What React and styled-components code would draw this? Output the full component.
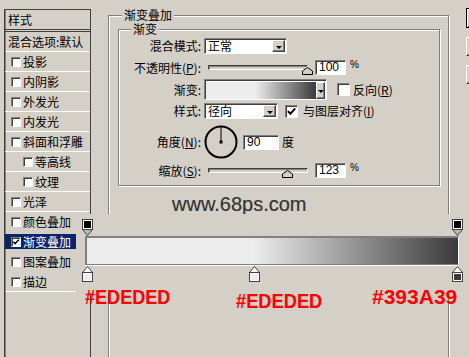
import styled, { createGlobalStyle, css } from "styled-components"

const FACE = "#d4d0c8"
const GRADIENT = "linear-gradient(to right, #ededed 0%, #ededed 45%, #393a39 100%)"

const sunken = css`
    box-sizing: border-box;
    border: 1px solid;
    border-color: #808080 #fff #fff #808080;
    box-shadow: inset 1px 1px 0 #404040;
    background: #fff;
`

const raised = css`
    box-sizing: border-box;
    border: 1px solid;
    border-color: #fff #404040 #404040 #fff;
    box-shadow: inset -1px -1px 0 #808080;
    background: ${FACE};
`

const layers = [
    { label: '投影' },
    { label: '内阴影' },
    { label: '外发光' },
    { label: '内发光' },
    { label: '斜面和浮雕' },
    { label: '等高线', indent: true },
    { label: '纹理', indent: true },
    { label: '光泽' },
    { label: '颜色叠加', line: 'none' },
    { label: '渐变叠加', line: 'none', active: true, checked: true },
    { label: '图案叠加', line: 'none' },
    { label: '描边', line: 'short' },
]

const opacityStops = [0, 100]
const colorStops = [
    { pos: 0, color: '#ededed', label: '#EDEDED', mt: 0, sx: 0.86 },
    { pos: 45, color: '#ededed', label: '#EDEDED', mt: 4, sx: 0.87 },
    { pos: 100, color: '#393a39', label: '#393A39', mt: 0, sx: 1 },
]

export default function App() {
    return (
        <>
            <GlobalStyle />
            <Screen>
                <LeftPanel>
                    <Header>样式</Header>
                    <List>
                        <ListRow>
                            <Item><Entry>混合选项:默认</Entry></Item>
                        </ListRow>
                        {layers.map(l => (
                            <ListRow key={l.label} $line={l.line}>
                                <Item>
                                    <Entry $active={l.active} $indent={l.indent} $box>
                                        <SmallBox>{l.checked && <Check size={8} />}</SmallBox>
                                        {l.label}
                                    </Entry>
                                </Item>
                            </ListRow>
                        ))}
                    </List>
                </LeftPanel>

                <GroupBox $w={341} $h={360} $mt={15} $ml={17}>
                    <Caption $x={13}>渐变叠加</Caption>
                    <GroupBox $w={322} $h={157} $mt={13} $ml={9}>
                        <Caption $x={12}>渐变</Caption>

                        <Row $h={16} $mt={8}>
                            <Label>混合模式:</Label>
                            <Select $w={83}>
                                <span>正常</span>
                                <DropBtn $w={13} $h={12}><Arrow /></DropBtn>
                            </Select>
                        </Row>

                        <Row $h={15} $mt={6}>
                            <Label>不透明性(<u>P</u>):</Label>
                            <Slider value={100} />
                            <NumField $w={31} $ml={7}>100</NumField>
                            <Percent>%</Percent>
                        </Row>

                        <Row $h={21} $mt={4}>
                            <Label>渐变:</Label>
                            <Preview>
                                <PreviewFill />
                                <DropBtn $w={9} $h={17}><Arrow /></DropBtn>
                            </Preview>
                            <CheckBox $ml={10} />
                            <OptionText $ml={3}>反向(<u>R</u>)</OptionText>
                        </Row>

                        <Row $h={16} $mt={3}>
                            <Label>样式:</Label>
                            <Select $w={74}>
                                <span>径向</span>
                                <DropBtn $w={13} $h={12}><Arrow /></DropBtn>
                            </Select>
                            <CheckBox $ml={7}><Check size={11} /></CheckBox>
                            <OptionText $ml={5}>与图层对齐(<u>I</u>)</OptionText>
                        </Row>

                        <Row $h={34} $mt={6}>
                            <Label>角度(<u>N</u>):</Label>
                            <Dial angle={90} />
                            <NumField $w={36} $ml={5}>90</NumField>
                            <OptionText $ml={3}>度</OptionText>
                        </Row>

                        <Row $h={15} $mt={4}>
                            <Label>缩放(<u>S</u>):</Label>
                            <Slider value={80} />
                            <NumField $w={31} $ml={7}>123</NumField>
                            <Percent>%</Percent>
                        </Row>
                    </GroupBox>
                    <Watermark>www.68ps.com</Watermark>
                </GroupBox>

                <ButtonStack>
                    <DlgButton $h={20} $default />
                    <DlgButton $h={19} />
                    <DlgButton $h={19} />
                </ButtonStack>

                <Editor>
                    <Cover>
                        <StopTrack $h={17}>
                            {opacityStops.map(p => (
                                <Marker key={p} style={{ left: `calc(${p}% - 5px)` }}>
                                    <OpacityStop />
                                </Marker>
                            ))}
                        </StopTrack>
                        <Bar />
                        <StopTrack $h={16} $mt={1}>
                            {colorStops.map(s => (
                                <Marker key={s.pos} style={{ left: `calc(${s.pos}% - 5px)` }}>
                                    <ColorStop color={s.color} />
                                </Marker>
                            ))}
                        </StopTrack>
                    </Cover>
                    <Notes>
                        {colorStops.map(s => (
                            <Note key={s.pos} $mt={s.mt} $sx={s.sx}>{s.label}</Note>
                        ))}
                    </Notes>
                </Editor>
            </Screen>
        </>
    )
}

const Check = ({ size }) => (
    <svg width={size} height={size} viewBox="0 0 10 10">
        <path d="M1.8 4.6 L4 7 L8.4 2.2" fill="none" stroke="#000" strokeWidth="1.8" />
    </svg>
)

const Slider = ({ value }) => (
    <Track>
        <Thumb style={{ left: `calc(${value}% - 5px)` }}>
            <svg width="11" height="8" viewBox="0 0 11 8">
                <path d="M0.5 4 L5.5 0.5 L10.5 4 L10.5 7.5 L0.5 7.5 Z" fill={FACE} stroke="#000" />
            </svg>
        </Thumb>
    </Track>
)

const Dial = ({ angle }) => {
    const r = (angle * Math.PI) / 180
    const x = 17 + Math.cos(r) * 15
    const y = 17 - Math.sin(r) * 15
    return (
        <DialWrap>
            <svg width="34" height="34" viewBox="0 0 34 34">
                <circle cx="17" cy="17" r="15.5" fill="none" stroke="#000" strokeWidth="2" />
                <line x1="17" y1="17" x2={x} y2={y} stroke="#000" strokeWidth="1" />
                <rect x="15.5" y="15.5" width="3" height="3" fill="#000" />
            </svg>
        </DialWrap>
    )
}

const OpacityStop = () => (
    <svg width="11" height="17" viewBox="0 0 11 17">
        <path d="M0.5 10.5 L5.5 16.5 L10.5 10.5 Z" fill="#b8b8b8" stroke="#404040" />
        <rect x="0.5" y="0.5" width="10" height="10" fill="#fff" stroke="#404040" />
        <rect x="2" y="2" width="7" height="7" fill="#000" />
    </svg>
)

const ColorStop = ({ color }) => (
    <svg width="11" height="16" viewBox="0 0 11 16">
        <path d="M0.5 6.5 L5.5 0.5 L10.5 6.5 Z" fill="#fff" stroke="#404040" />
        <rect x="0.5" y="6.5" width="10" height="9" fill="#fff" stroke="#404040" />
        <rect x="2" y="8" width="7" height="6" fill={color} />
    </svg>
)

const GlobalStyle = createGlobalStyle`
    html, body {
        margin: 0;
        padding: 0;
        background: ${FACE};
    }
    body {
        font-family: "Noto Sans CJK SC", "Noto Sans", sans-serif;
        font-size: 12px;
        color: #000;
    }
`

const Screen = styled.div`
    position: relative;
    width: 469px;
    height: 357px;
    overflow: hidden;
    display: flex;
    align-items: flex-start;
    background: ${FACE};
`

const LeftPanel = styled.div`
    flex-shrink: 0;
    margin: 9px 0 0 4px;
    width: 87px;
    height: 348px;
    box-sizing: border-box;
    border-left: 1px solid #404040;
    border-right: 1px solid #404040;
    box-shadow: inset 1px 0 0 #808080;
`

const Header = styled.div`
    box-sizing: border-box;
    height: 21px;
    border-top: 1px solid #404040;
    border-bottom: 1px solid #404040;
    padding-left: 3px;
    line-height: 19px;
`

const List = styled.div`
    margin-top: 1px;
    border-top: 1px solid #404040;
`

const ListRow = styled.div`
    height: 20px;
    display: flex;
    flex-direction: column;

    &::after {
        content: '';
        display: ${({ $line }) => ($line === 'none' ? 'none' : 'block')};
        height: 1px;
        width: ${({ $line }) => ($line === 'short' ? '71px' : 'auto')};
        background: #fff;
    }
`

const Item = styled.div`
    height: 19px;
    display: flex;
    align-items: center;
`

const Entry = styled.div`
    box-sizing: border-box;
    display: flex;
    align-items: center;
    gap: 2px;
    width: 71px;
    height: 15px;
    line-height: 14px;
    white-space: nowrap;
    padding-left: ${({ $box, $indent }) => (!$box ? 3 : $indent ? 18 : 6)}px;
    background: ${({ $active }) => ($active ? '#0a246a' : 'transparent')};
    color: ${({ $active }) => ($active ? '#fff' : '#000')};
`

const SmallBox = styled.span`
    ${sunken};
    flex-shrink: 0;
    width: 10px;
    height: 10px;
    display: flex;
    align-items: center;
    justify-content: center;
`

const GroupBox = styled.div`
    position: relative;
    flex-shrink: 0;
    box-sizing: border-box;
    width: ${({ $w }) => $w}px;
    height: ${({ $h }) => $h}px;
    margin: ${({ $mt }) => $mt}px 0 0 ${({ $ml }) => $ml}px;
    border: 1px solid #808080;
    box-shadow: inset 1px 1px 0 #fff, 1px 1px 0 #fff;
`

const Caption = styled.span`
    position: absolute;
    top: -7px;
    left: ${({ $x }) => $x}px;
    padding: 0 2px;
    line-height: 12px;
    background: ${FACE};
    white-space: nowrap;
`

const Row = styled.div`
    display: flex;
    align-items: center;
    height: ${({ $h }) => $h}px;
    margin-top: ${({ $mt }) => $mt}px;
`

const Label = styled.div`
    flex-shrink: 0;
    width: 82px;
    margin-right: 3px;
    text-align: right;
    line-height: 14px;
    white-space: nowrap;
`

const Select = styled.div`
    ${sunken};
    width: ${({ $w }) => $w}px;
    height: 16px;
    display: flex;
    align-items: center;
    padding-left: 3px;
    line-height: 14px;
`

const DropBtn = styled.span`
    ${raised};
    margin-left: auto;
    margin-right: 1px;
    width: ${({ $w }) => $w}px;
    height: ${({ $h }) => $h}px;
    display: flex;
    align-items: center;
    justify-content: center;
    padding-top: 2px;
`

const Arrow = styled.span`
    width: 0;
    height: 0;
    border-left: 3px solid transparent;
    border-right: 3px solid transparent;
    border-top: 3px solid #000;
`

const Track = styled.div`
    position: relative;
    flex-shrink: 0;
    box-sizing: border-box;
    width: 100px;
    height: 5px;
    margin-left: 4px;
    border: 1px solid;
    border-color: #404040 #fff #fff #404040;
    box-shadow: inset 1px 1px 0 #808080;
    background: ${FACE};
`

const Thumb = styled.span`
    position: absolute;
    top: 1px;
    line-height: 0;
`

const NumField = styled.div`
    ${sunken};
    flex-shrink: 0;
    width: ${({ $w }) => $w}px;
    height: 15px;
    margin-left: ${({ $ml }) => $ml}px;
    padding-left: 3px;
    font-family: "Liberation Sans", Arial, sans-serif;
    font-size: 12px;
    line-height: 13px;
`

const Percent = styled.span`
    align-self: flex-start;
    margin-left: 4px;
    font-family: "Liberation Sans", Arial, sans-serif;
    font-size: 10px;
    line-height: 10px;
`

const Preview = styled.div`
    ${sunken};
    flex-shrink: 0;
    width: 123px;
    height: 21px;
    display: flex;
    align-items: center;
    padding: 1px 0 0 1px;
`

const PreviewFill = styled.span`
    flex: 1;
    height: 17px;
    background: ${GRADIENT};
`

const CheckBox = styled.span`
    ${sunken};
    flex-shrink: 0;
    width: 13px;
    height: 13px;
    margin-left: ${({ $ml }) => $ml}px;
    display: flex;
    align-items: center;
    justify-content: center;
`

const OptionText = styled.span`
    margin-left: ${({ $ml }) => $ml}px;
    line-height: 14px;
    white-space: nowrap;
`

const DialWrap = styled.span`
    flex-shrink: 0;
    line-height: 0;
`

const Watermark = styled.div`
    margin: 8px 0 0 63px;
    font-family: "Liberation Sans", Arial, sans-serif;
    font-size: 20px;
    line-height: 20px;
    color: #333;
    -webkit-text-stroke: 0.2px #333;
`

const ButtonStack = styled.div`
    flex-shrink: 0;
    margin: 8px 0 0 17px;
    display: flex;
    flex-direction: column;
    gap: 9px;
`

const DlgButton = styled.div`
    ${raised};
    width: 80px;
    height: ${({ $h }) => $h}px;
    ${({ $default }) => $default && css`
        border-color: #000;
        box-shadow: inset 1px 1px 0 #fff, inset -1px -1px 0 #404040;
    `}
`

const Editor = styled.div`
    position: absolute;
    left: 77px;
    top: 214px;
    width: 392px;
`

const Cover = styled.div`
    box-sizing: border-box;
    height: 79px;
    padding-top: 5px;
    background: ${FACE};
`

const StopTrack = styled.div`
    position: relative;
    margin: ${({ $mt = 0 }) => $mt}px 0 0 10px;
    width: 370px;
    height: ${({ $h }) => $h}px;
`

const Marker = styled.span`
    position: absolute;
    top: 0;
    line-height: 0;
`

const Bar = styled.div`
    box-sizing: border-box;
    margin-left: 8px;
    width: 374px;
    height: 29px;
    border-style: solid;
    border-width: 2px 1px 1px 2px;
    border-color: #808080 #fff #808080 #808080;
    box-shadow: 0 1px 0 #fff;
    background: ${GRADIENT};
`

const Notes = styled.div`
    display: grid;
    grid-template-columns: 151px 136px auto;
    align-items: start;
    margin-top: -7px;
    padding-left: 8px;
`

const Note = styled.div`
    margin-top: ${({ $mt }) => $mt}px;
    font-family: "Liberation Sans", Arial, sans-serif;
    font-weight: bold;
    font-size: 21px;
    line-height: 21px;
    color: #f00;
    white-space: nowrap;
    transform: scaleX(${({ $sx }) => $sx});
    transform-origin: left center;
`
